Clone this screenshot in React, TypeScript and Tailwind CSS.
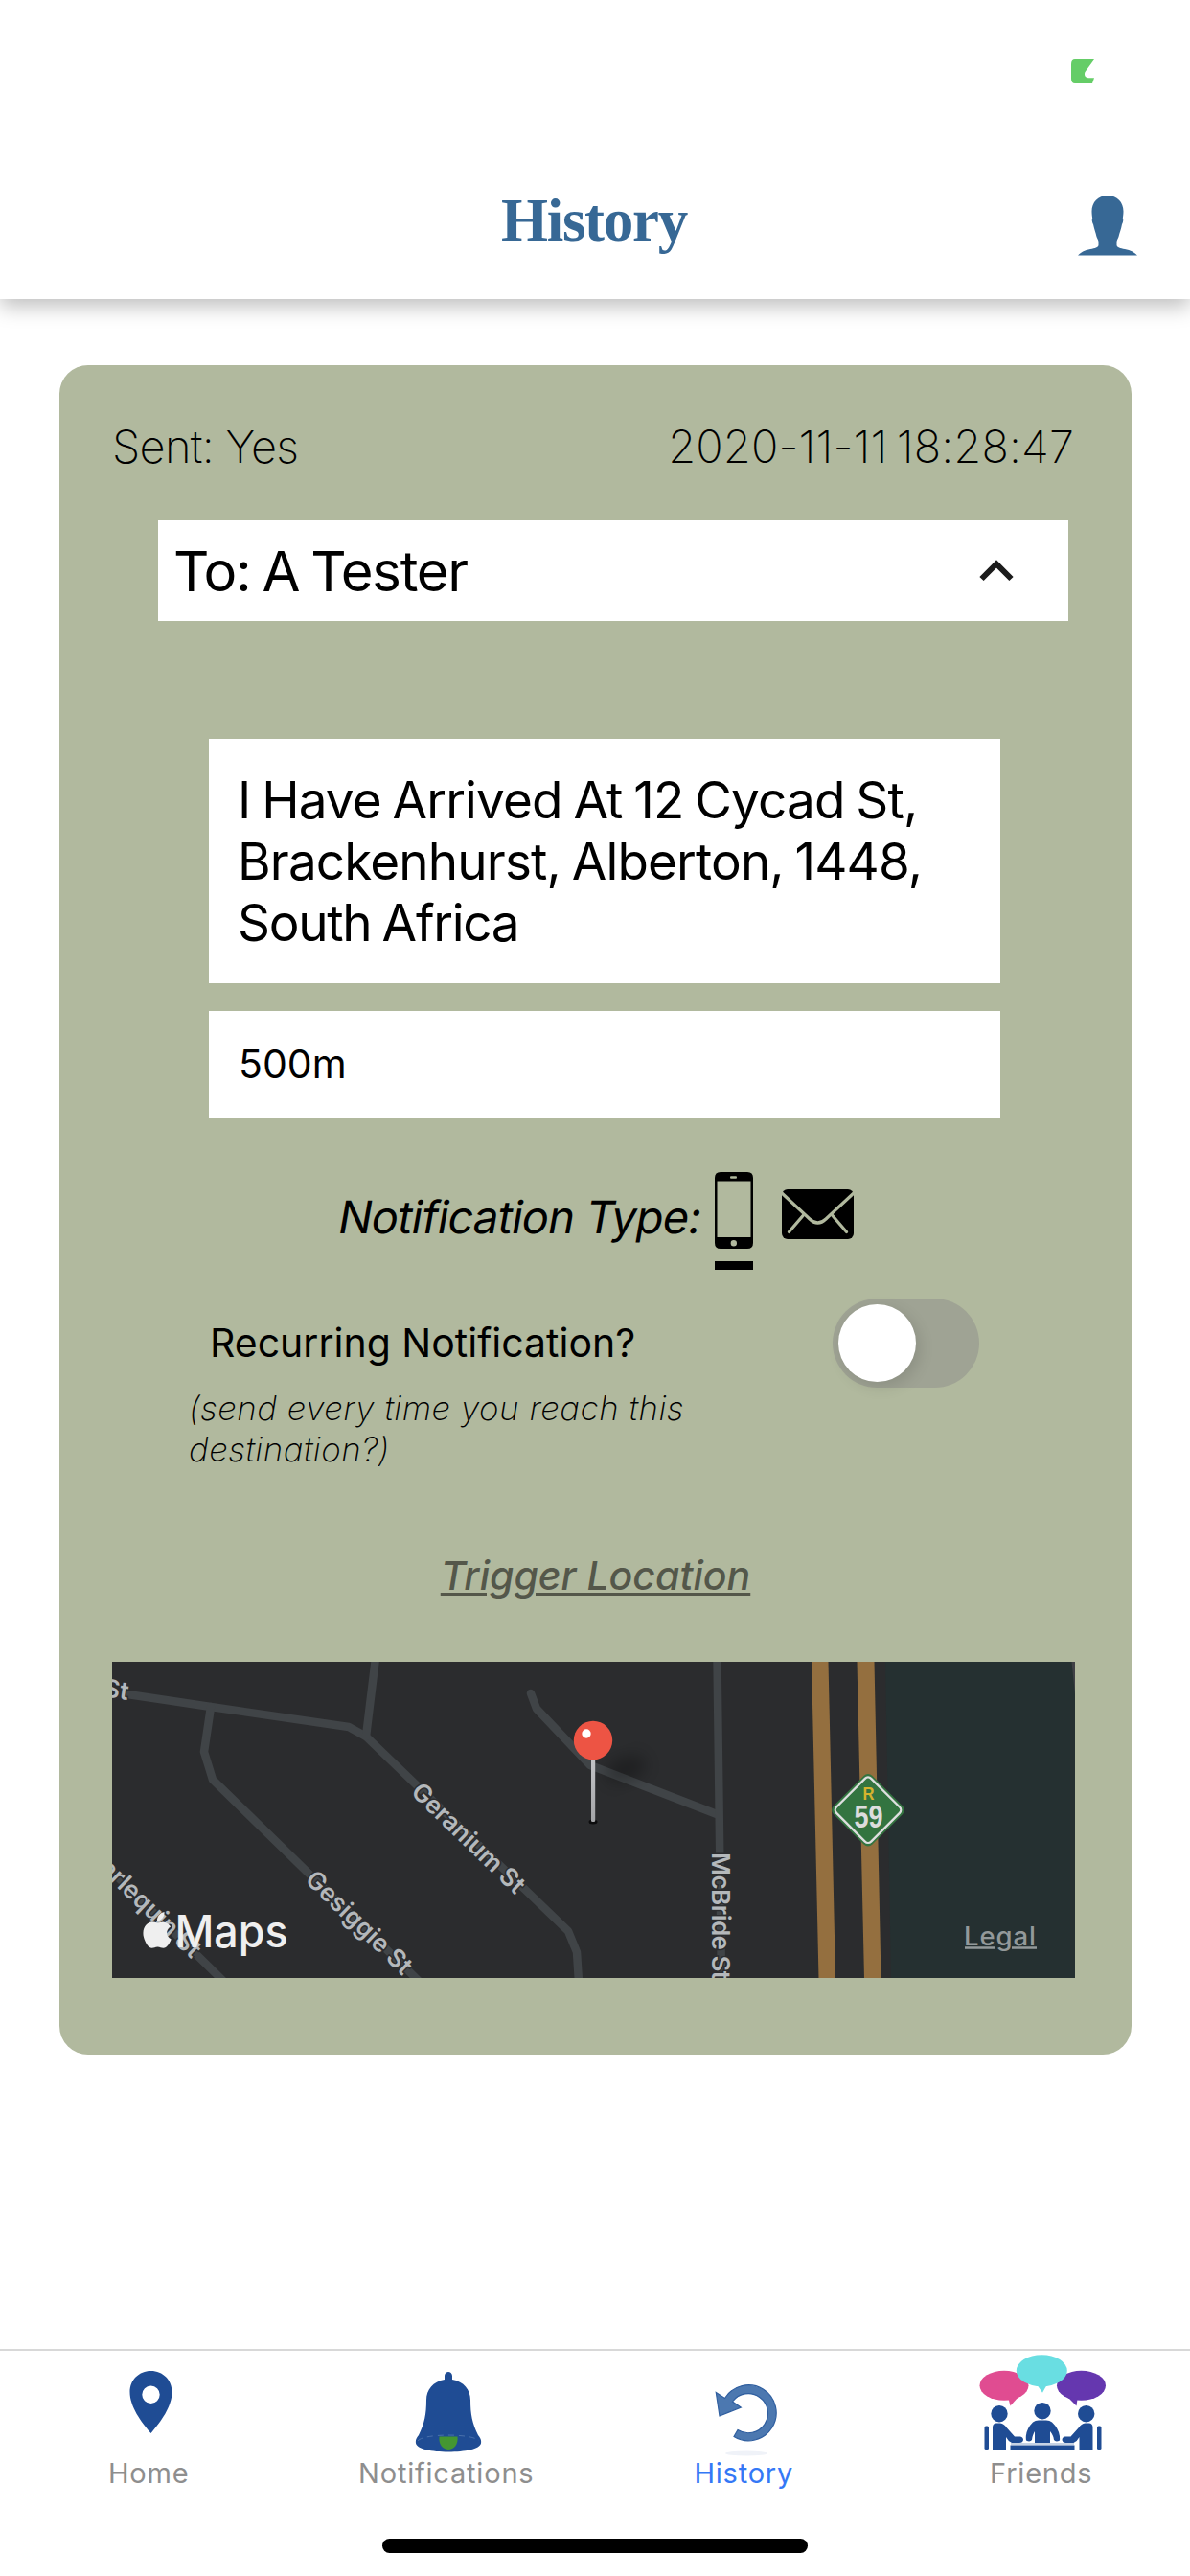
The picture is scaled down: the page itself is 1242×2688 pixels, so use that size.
import type { ReactNode } from "react";

function PersonIcon() {
  return (
    <svg width="62" height="63" viewBox="0 0 62 63" fill="#376895" className="block">
      <path d="M31 0C41 0 47.5 7 47.5 16.500C47.500 19 47.200 21.500 46.800 23.500C47.600 24.500 47.300 28 46 30C45.200 35 43.500 38.500 42.500 43C41.500 45.500 40.500 46.500 40.500 49V52C41 54.500 44 55 49 56C55 57.200 59.500 59.500 62 62.600H0C2.500 59.500 7 57.200 13 56C18 55 21 54.500 21.500 52V49C21.500 46.500 20.500 45.500 19.500 43C18.500 38.500 17 35 16 30C14.700 28 14.400 24.500 15.200 23.500C14.800 21.500 14.500 19 14.500 16.500C14.500 7 21 0 31 0Z" />
    </svg>
  );
}

function Header() {
  return (
    <header className="relative flex h-[312px] flex-col bg-white shadow-[0_8px_20px_rgba(0,0,0,0.25)]">
      <div className="flex justify-end pt-[62px] pr-[100px]">
        <svg width="24" height="25" viewBox="0 0 24 25" className="block">
          <path d="M4 0H24L14.500 13C13.200 16 14.500 19 18 19.200H24L22 25H4Q0 25 0 20V5Q0 0 4 0Z" fill="#65cd67" />
        </svg>
      </div>
      <div className="flex flex-1 justify-between pt-[107px] pr-[55px] pl-[523px]">
        <h1 className="font-['Liberation_Serif',serif] text-[63px] leading-[72px] font-bold tracking-[-1.3px] text-[#376895]">
          History
        </h1>
        <div className="pt-[10px]">
          <PersonIcon />
        </div>
      </div>
    </header>
  );
}

function PhoneIcon() {
  return (
    <svg width="40" height="80" viewBox="0 0 40 80" className="block">
      <path
        fillRule="evenodd"
        d="M6 0H34Q40 0 40 6V74Q40 80 34 80H6Q0 80 0 74V6Q0 0 6 0ZM2.500 9.500V68H37.500V9.500ZM17 4.200Q16 4.200 16 5.500Q16 6.800 17 6.800H22Q23 6.800 23 5.500Q23 4.200 22 4.200ZM19.800 71A3.200 3.200 0 1 0 19.800 77.400A3.200 3.200 0 1 0 19.800 71Z"
      />
    </svg>
  );
}

function MailIcon() {
  return (
    <svg width="75" height="52" viewBox="0 0 75 52" className="block">
      <rect width="75" height="52" rx="6" />
      <g fill="none" stroke="#b1b99e" strokeWidth="3.200" strokeLinecap="round">
        <path d="M0 4L29 31Q37.500 39 46 31L75 4" />
        <path d="M22.500 27L7.500 44.500M52.500 27L67.500 44.500" />
      </g>
    </svg>
  );
}

function LocationMap() {
  return (
    <svg width="1005" height="330" viewBox="0 0 1005 330" className="block font-['Inter',sans-serif]">
      <defs>
        <filter id="soft" x="-50%" y="-50%" width="200%" height="200%">
          <feGaussianBlur stdDeviation="8" />
        </filter>
        <linearGradient id="needle" x1="0" x2="0" y1="0" y2="1">
          <stop offset="0" stopColor="#c4c5c8" />
          <stop offset="1" stopColor="#a4a5a8" />
        </linearGradient>
      </defs>
      <rect width="1005" height="330" fill="#2b2c2e" />
      <path d="M807 0H1005V330H813Z" fill="#253031" />
      <path d="M1001.500 0H1005V34Z" fill="#3f4045" />
      <g fill="none" stroke="#404447" strokeWidth="8.500" strokeLinecap="round" strokeLinejoin="round">
        <path d="M16 34L103 47L247 68L265 78L476 281L485 303L487 334" />
        <path d="M275 -4L265 78" />
        <path d="M103 47L96 94L105 123L320 333" />
        <path d="M0 219L116 333" />
        <path d="M437 33L443 49L499 108L631 159" />
        <path d="M631.500 -4L636 334" />
      </g>
      <g fill="#946f3f">
        <path d="M730 0H747.500L755 330H737.500Z" />
        <path d="M777.500 0H795.500L802.500 330H785Z" />
      </g>
      <g fill="#b4b8bb" fontSize="26" fontWeight="600" stroke="#2b2c2e" strokeWidth="3" paintOrder="stroke">
        <text x="16" y="40" textAnchor="end" transform="rotate(8 16 40)">St</text>
        <text textAnchor="middle" textLength="153" transform="translate(372 184) rotate(44)" y="9">Geranium St</text>
        <text textAnchor="middle" textLength="143" transform="translate(258 272) rotate(44)" y="9">Gesiggie St</text>
        <text textAnchor="end" textLength="154" transform="translate(89 304) rotate(44)" y="9">Harlequin St</text>
        <text textLength="133" transform="translate(625.5 199) rotate(90)">McBride St</text>
      </g>
      <ellipse cx="536" cy="112" rx="22" ry="12" fill="#000" opacity="0.28" filter="url(#soft)" transform="rotate(-20 536 112)" />
      <ellipse cx="502" cy="167" rx="4.500" ry="2.500" fill="#0c0c0d" />
      <rect x="500" y="100" width="4.200" height="67" rx="1.500" fill="url(#needle)" />
      <circle cx="502" cy="82" r="20.200" fill="#ed5444" />
      <circle cx="495" cy="75" r="4.700" fill="#fff" />
      <rect x="760.500" y="126.200" width="57" height="57" rx="6" fill="#337440" transform="rotate(45 789 154.700)" />
      <rect x="763.500" y="129.200" width="51" height="51" rx="4.500" fill="#337440" stroke="#dedfdf" strokeWidth="2.300" transform="rotate(45 789 154.700)" />
      <g fontFamily="'Liberation Sans', sans-serif" fontWeight="700" textAnchor="middle">
        <text x="789.500" y="143.700" fontSize="19" fill="#d6b32e" textLength="12" lengthAdjust="spacingAndGlyphs">R</text>
        <text x="789.500" y="172.500" fontSize="33" fill="#dcdddd" textLength="30" lengthAdjust="spacingAndGlyphs">59</text>
      </g>
      <g fill="#efefef">
        <path d="M56.500 272.500C53 270.500 50 272 47.500 272.800C45 272 42 270.500 39 272C33 274.500 31.500 281.500 33 287.500C34.500 293 38 298.800 41.500 298.800C43.800 298.800 44.800 297.500 47.500 297.500C50.200 297.500 51 298.800 53.500 298.800C57 298.800 60 294 61.700 289.500C56 287 55.500 279.500 61 276.500C60 274.500 58 273.200 56.500 272.500ZM47 270.500C46.600 265.500 50.500 261.800 54.500 261C55 266 51 270.500 47 270.500Z" />
        <text x="65.500" y="298" fontSize="47" fontWeight="500" textLength="118" lengthAdjust="spacingAndGlyphs">Maps</text>
      </g>
      <text x="889" y="296" fontSize="27.500" fontWeight="500" fill="#93999a" textLength="75">Legal</text>
      <path d="M890 298.500H921M939 298.500H965" stroke="#93999a" strokeWidth="2.500" />
    </svg>
  );
}

function NotificationCard() {
  return (
    <section className="mx-[62px] mt-[69px] flex h-[1763px] w-[1119px] flex-col rounded-[30px] bg-[#b1b99e] pt-[55px] text-black">
      <div className="mr-[60px] ml-[55px] flex h-[60px] items-center justify-between text-[47px] leading-[60px] font-extralight">
        <span className="tracking-[-0.7px]">Sent: Yes</span>
        <span className="tracking-[0.1px] [word-spacing:-4px]">2020-11-11 18:28:47</span>
      </div>

      <div className="mt-[47px] ml-[103px] flex h-[105px] w-[950px] items-center justify-between bg-white pr-[57px] pl-[16px]">
        <span className="text-[58px] leading-[72px] tracking-[-1.3px] [word-spacing:-3px]">To: A Tester</span>
        <svg width="36" height="24" viewBox="0 0 36 24" fill="none" className="block">
          <path d="M2.500 20L18 4.500L33.500 20" stroke="#1c1c1c" strokeWidth="6" />
        </svg>
      </div>

      <div className="mt-[123px] ml-[156px] flex h-[255px] w-[826px] flex-col bg-white pt-[31.5px] pl-[30px] text-[53px] leading-[64.4px] tracking-[-0.85px] [word-spacing:-2.3px]">
        <span>I Have Arrived At 12 Cycad St,</span>
        <span>Brackenhurst, Alberton, 1448,</span>
        <span className="tracking-[-1.3px]">South Africa</span>
      </div>
      <div className="mt-[29px] ml-[156px] flex h-[112px] w-[826px] items-center bg-white pl-[31px] text-[41px]">
        500m
      </div>

      <div className="mt-[56px] ml-[288px] flex h-[102px] items-start">
        <div className="w-[396px] pt-[17px]">
          <span className="inline-block -skew-x-[10deg] pl-[4px] text-[47px] leading-[60px] tracking-[-0.8px] whitespace-nowrap">
            Notification Type:
          </span>
        </div>
        <div className="flex flex-col gap-[13px]">
          <PhoneIcon />
          <div className="h-[9px] w-[40px] bg-black" />
        </div>
        <div className="ml-[30px] pt-[18px]">
          <MailIcon />
        </div>
      </div>

      <div className="mt-[30px] mr-[159px] ml-[157px] flex h-[93px] items-center justify-between">
        <span className="text-[41px] whitespace-nowrap">Recurring Notification?</span>
        <div className="flex h-[93px] w-[153px] items-center rounded-full bg-[#9fa394] px-[6px]">
          <div className="size-[81px] rounded-full bg-white shadow-[4px_5px_16px_rgba(0,0,0,0.12)]" />
        </div>
      </div>
      <p className="ml-[135px] text-[35px] leading-[43.4px] font-extralight tracking-[0.48px] whitespace-nowrap italic">
        (send every time you reach this
        <br />
        destination?)
      </p>

      <div className="mt-[84px] text-center text-[41px] leading-[50px] font-medium text-[#54574a] italic underline decoration-[3px] underline-offset-[3px]">
        Trigger Location
      </div>
      <div className="mt-[65px] ml-[55px]">
        <LocationMap />
      </div>
    </section>
  );
}

function HomeIcon() {
  return (
    <svg width="45" height="65" viewBox="0 0 45 65" className="mt-[21px] ml-[5px] block">
      <path fillRule="evenodd" fill="#1f4c94" d="M22.500 0C35 0 44.500 9.500 44.500 22C44.500 37 33 53 22.500 65C12 53 0.500 37 0.500 22C0.500 9.500 10 0 22.500 0ZM22.500 15.500A9.200 9.200 0 1 0 22.500 33.900A9.200 9.200 0 1 0 22.500 15.500Z" />
    </svg>
  );
}

function BellIcon() {
  return (
    <svg width="70" height="84" viewBox="0 0 70 84" className="mt-[22px] ml-[4px] block">
      <path fill="#1f4c94" d="M31 8V4C31.500 -1.300 38.500 -1.300 39 4V8C51 10 58 18.500 58 29.500C58 44 60 54 66 66C68.500 69 69.500 71 69 74.500C68 80.500 52 83.500 35 83.500C18 83.500 2 80.500 1 74.500C0.500 71 1.500 69 4 66C10 54 12 44 12 29.500C12 18.500 19 10 31 8Z" />
      <path d="M3 72C9 64 61 64 67 72" fill="none" stroke="#4d74ae" strokeWidth="0.900" strokeDasharray="6 5" />
      <path d="M25.500 67.500H44.500C45.500 76 40.500 81 35 81C29.500 81 24.500 76 25.500 67.500Z" fill="#449631" />
    </svg>
  );
}

function HistoryIcon() {
  return (
    <svg width="66" height="76" viewBox="0 0 66 76" className="mt-[35px] ml-[5px] block">
      <path
        d="M1.300 8.500L10.500 14.500A29 29 0 1 1 20 54.500L24 47.500A20.500 20.500 0 1 0 18.500 18L27.300 24L5 33Z"
        fill="#4c78b0"
        stroke="#2f5e9f"
        strokeWidth="1.200"
      />
      <ellipse cx="33" cy="72" rx="22" ry="2.500" fill="#eff2f8" />
    </svg>
  );
}

function FriendsIcon() {
  return (
    <svg width="132" height="100" viewBox="0 0 132 100" className="mt-[4px] ml-[3px] block">
      <g fill="#e04c91">
        <ellipse cx="26" cy="32.300" rx="25.500" ry="15.500" />
        <path d="M30.500 46L32.500 53.500L41 44Z" />
      </g>
      <g fill="#6537af">
        <ellipse cx="106.500" cy="32.300" rx="25.500" ry="15.500" />
        <path d="M92 44L101.500 53.500L102.500 46Z" />
      </g>
      <g fill="#69dee2">
        <ellipse cx="65.300" cy="16.700" rx="26.500" ry="16.500" />
        <path d="M60 31L66 39.700L71 31Z" />
      </g>
      <g fill="#1f4c94">
        <circle cx="21" cy="61.700" r="8.700" />
        <circle cx="66" cy="58.700" r="8.700" />
        <circle cx="111.700" cy="61.700" r="8.700" />
        <path d="M14 99V76Q14 71.500 18 71.500H22Q26 72 28.500 76L37 85.500H43Q46 86 46 89Q45.500 92 42 92H34Q30 90 28 86V99Z" />
        <path d="M118.500 99V76Q118.500 71.500 114.500 71.500H110.500Q106.500 72 104 76L95.500 85.500H89.500Q86.500 86 86.500 89Q87 92 90.500 92H98.500Q102.500 90 104.500 86V99Z" />
        <path d="M58 92V80Q55.500 84 55 89Q53 91.500 49 89.500Q47.500 79 56 70.500Q58.500 68.500 62 68.500H70Q73.500 68.500 76 70.500Q85 79 84 89.500Q80 91.500 78 89Q77.500 84 74 80V92Z" />
        <rect x="32.500" y="94.500" width="67" height="4.500" />
        <rect x="5.500" y="74.500" width="4.500" height="24.500" rx="1.500" />
        <rect x="123" y="74.500" width="4.500" height="24.500" rx="1.500" />
      </g>
      <path d="M33 93H99" stroke="#8ea6c9" strokeWidth="1" />
    </svg>
  );
}

function Tab({ label, active, children }: { label: string; active?: boolean; children: ReactNode }) {
  return (
    <div className="flex flex-1 flex-col items-center">
      <div className="flex h-[110px] items-start">{children}</div>
      <span className={`text-[29px] leading-[36px] tracking-[0.8px] ${active ? "text-[#3478f6]" : "text-[#8e8e8e]"}`}>{label}</span>
    </div>
  );
}

export default function App() {
  return (
    <div className="flex h-[2688px] w-[1242px] flex-col overflow-hidden bg-white font-['Inter',sans-serif]">
      <Header />
      <NotificationCard />
      <nav className="mt-auto flex h-[237px] flex-col border-t-[2px] border-[#d8d8d8]">
        <div className="flex h-[196px]">
          <Tab label="Home"><HomeIcon /></Tab>
          <Tab label="Notifications"><BellIcon /></Tab>
          <Tab label="History" active><HistoryIcon /></Tab>
          <Tab label="Friends"><FriendsIcon /></Tab>
        </div>
        <div className="mx-auto h-[15px] w-[444px] rounded-full bg-black" />
      </nav>
    </div>
  );
}
